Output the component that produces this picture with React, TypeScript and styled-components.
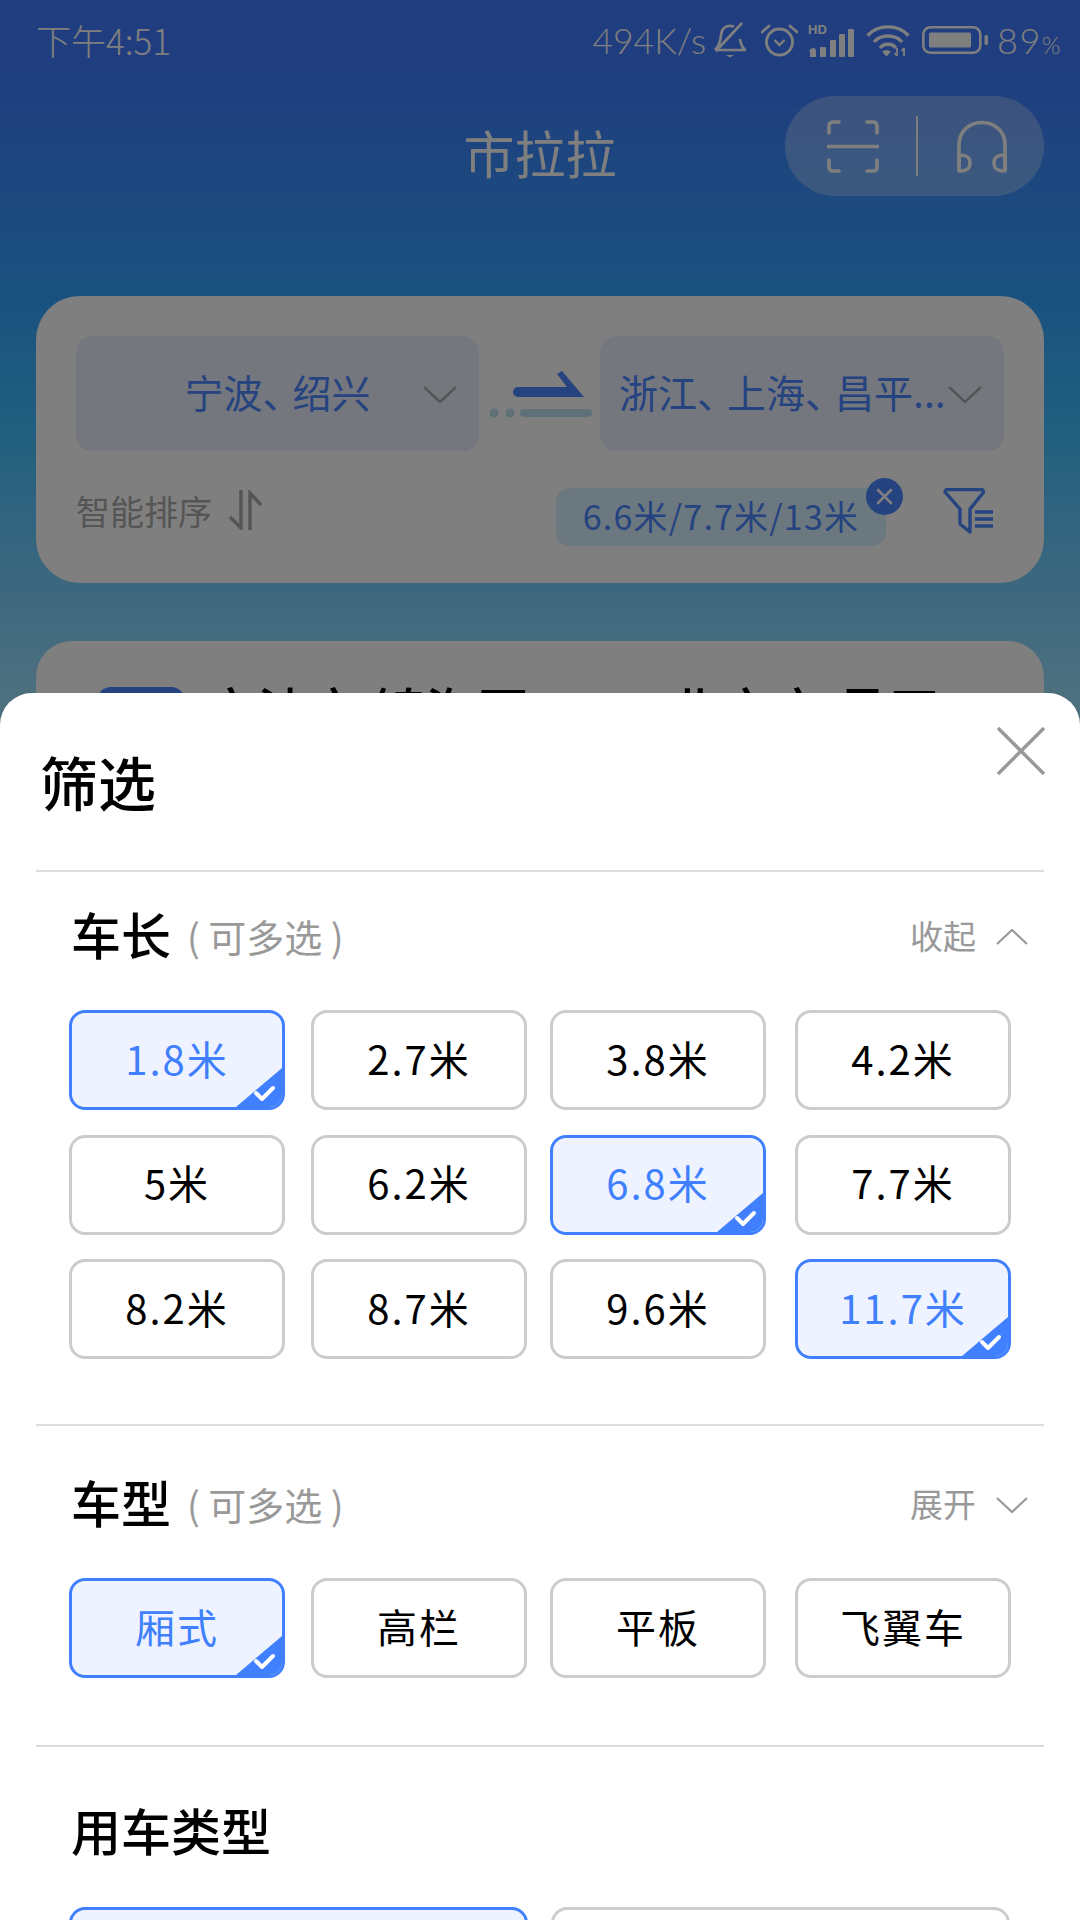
import React from 'react';
import styled, {createGlobalStyle} from 'styled-components';

const Global = createGlobalStyle`
  html, body {
    margin: 0;
    padding: 0;
    background: #fff;
  }
  * {
    box-sizing: border-box;
  }
`;

const Screen = styled.div`
  position: relative;
  width: 1080px;
  height: 1920px;
  overflow: hidden;
  font-family: 'Noto Sans CJK SC', 'Noto Sans', sans-serif;
  background: linear-gradient(
    180deg,
    #427afe 0,
    #3f80fe 100px,
    #3c8aff 150px,
    #34a4ff 300px,
    #42c0fe 430px,
    #7ed0fe 600px,
    #9ae0ff 690px,
    #9ae0ff 100%
  );
`;

const StatusBar = styled.div`
  display: flex;
  align-items: center;
  justify-content: space-between;
  height: 80px;
  padding: 0 18px 0 36px;
  color: #fff;
  font-family: 'Lato', 'Noto Sans CJK SC', sans-serif;
  font-weight: 300;
`;

const Clock = styled.span`
  font-size: 35px;
  line-height: 78px;
  font-family: 'Noto Sans CJK SC', sans-serif;
  font-weight: 300;
`;

const StatusRight = styled.div`
  display: flex;
  align-items: center;
`;

const Speed = styled.span`
  font-size: 35.5px;
  margin-right: 7px;
`;

const StatusIcon = styled.svg<{$ml?: number}>`
  display: block;
  margin-left: ${p => p.$ml ?? 0}px;
`;

const Percent = styled.span`
  margin-left: 9px;
  font-size: 36px;
  letter-spacing: 1.5px;

  small {
    font-size: 24px;
  }
`;

const Header = styled.div`
  display: grid;
  grid-template-columns: 1fr auto 1fr;
  padding: 16px 36px 0;
`;

const Title = styled.div`
  grid-column: 2;
  margin-top: 19px;
  font-size: 51px;
  line-height: 74px;
  color: #fff;
`;

const Pill = styled.div`
  justify-self: end;
  display: flex;
  align-items: center;
  width: 259px;
  height: 100px;
  padding-left: 42px;
  border-radius: 50px;
  background: rgba(255, 255, 255, 0.3);
`;

const PillRule = styled.div`
  width: 2px;
  height: 60px;
  margin: 0 39px 0 37px;
  background: #fff;
`;

const SearchCard = styled.div`
  margin: 100px 36px 0;
  height: 287px;
  padding: 40px;
  border-radius: 44px;
  background: #fff;
`;

const RouteRow = styled.div`
  display: flex;
  height: 115px;
`;

const CityBox = styled.div<{$pad?: boolean}>`
  position: relative;
  width: ${p => (p.$pad ? 404 : 403)}px;
  display: flex;
  align-items: center;
  justify-content: ${p => (p.$pad ? 'flex-start' : 'center')};
  padding-left: ${p => (p.$pad ? 19 : 0)}px;
  padding-bottom: 5px;
  border-radius: 16px;
  background: #eaeefe;
  color: #4a86ff;
  font-size: 39px;
  white-space: nowrap;
`;

const Dun = styled.span`
  letter-spacing: -9px;
`;

const BoxChevron = styled.svg`
  position: absolute;
  right: 22px;
  top: 50px;
`;

const OptionRow = styled.div`
  display: flex;
  align-items: flex-start;
  justify-content: space-between;
  margin-top: 37px;
  padding-right: 11px;
`;

const SortLabel = styled.div`
  display: flex;
  align-items: center;
  gap: 16px;
  height: 44px;
  font-size: 34px;
  color: #aaa;
`;

const TagGroup = styled.div`
  display: flex;
  gap: 57px;
`;

const Tag = styled.div`
  position: relative;
  width: 330px;
  height: 58px;
  border-radius: 14px;
  background: #d7f0ff;
  color: #4a86ff;
  font-size: 34px;
  line-height: 56px;
  text-align: center;
  letter-spacing: 1.2px;
`;

const TagClear = styled.svg`
  position: absolute;
  right: -17px;
  top: -10px;
`;

const TripCard = styled.div`
  display: flex;
  align-items: flex-start;
  margin: 58px 36px 0;
  height: 400px;
  padding: 46px 0 0 61px;
  border-radius: 36px;
  background: #fff;
`;

const TripBadge = styled.div`
  width: 88px;
  height: 60px;
  margin-right: 20px;
  border-radius: 14px 14px 0 0;
  background: #4a86ff;
`;

const TripPlace = styled.div<{$gap?: number}>`
  margin-top: -7px;
  margin-right: ${p => p.$gap ?? 0}px;
  font-size: 52px;
  line-height: 60px;
  font-weight: 500;
  color: #000;
  white-space: pre;
`;

const Dim = styled.div`
  position: absolute;
  inset: 0;
  background: rgba(0, 0, 0, 0.5);
`;

const Sheet = styled.div`
  position: absolute;
  left: 0;
  right: 0;
  top: 693px;
  bottom: 0;
  overflow: hidden;
  border-radius: 32px 32px 0 0;
  background: #fff;
`;

const SheetHead = styled.div`
  display: flex;
  align-items: flex-start;
  justify-content: space-between;
  height: 177px;
  padding: 34px 35px 0 40px;
`;

const SheetTitle = styled.div`
  margin-top: 16px;
  font-size: 58px;
  line-height: 76px;
  font-weight: 500;
  color: #000;
`;

const Section = styled.section<{$top: number; $bottom: number}>`
  margin: 0 36px;
  padding: ${p => p.$top}px 16px ${p => p.$bottom}px 33px;
  border-top: 2px solid #dcdcdc;
`;

const SectionHead = styled.div<{$mb?: number}>`
  display: flex;
  align-items: center;
  justify-content: space-between;
  height: 60px;
  margin-bottom: ${p => p.$mb ?? 43}px;
`;

const SectionName = styled.div`
  display: flex;
  align-items: center;
  padding: 0 0 8px 2px;
  font-size: 50px;
  font-weight: 500;
  color: #000;

  span {
    margin: 4px 0 0 16px;
    font-size: 38px;
    font-weight: 400;
    color: #999;
  }
`;

const Toggle = styled.div`
  display: flex;
  align-items: center;
  gap: 20px;
  font-size: 33px;
  color: #999;

  span {
    padding-bottom: 5px;
  }
`;

const ChipGrid = styled.div<{$wide?: boolean}>`
  display: grid;
  grid-template-columns: ${p => (p.$wide ? '482px 459px' : '242px 239px 245px 216px')};
  grid-auto-rows: 100px;
  row-gap: 24.5px;
`;

const Chip = styled.div<{$on?: boolean; $wide?: boolean}>`
  position: relative;
  display: flex;
  align-items: center;
  justify-content: center;
  width: ${p => (p.$wide ? 459 : 216)}px;
  height: 100px;
  padding-bottom: 5px;
  overflow: hidden;
  border: 3px solid ${p => (p.$on ? '#4080ff' : '#cccccc')};
  border-radius: 16px;
  background: ${p => (p.$on ? '#eef3ff' : '#fff')};
  color: ${p => (p.$on ? '#4080ff' : '#000')};
  font-size: 40px;
  letter-spacing: 2px;
`;

const ChipCorner = styled.svg`
  position: absolute;
  right: 0;
  bottom: 0;
`;

const Chevron = ({up}: {up?: boolean}) => (
  <svg width="32" height="16" viewBox="0 0 32 16" fill="none" stroke="#999" strokeWidth="2.2">
    <path d={up ? 'M1 15L16 1L31 15' : 'M1 1L16 15L31 1'} />
  </svg>
);

const GreyChevron = () => (
  <BoxChevron width="34" height="17" viewBox="0 0 34 17" fill="none" stroke="#aaa" strokeWidth="2.4">
    <path d="M1 1L17 16L33 1" />
  </BoxChevron>
);

const Tick = () => (
  <ChipCorner width="46" height="39" viewBox="0 0 46 39">
    <path d="M46 0V39H0Z" fill="#4080ff" />
    <path d="M20 25L26 31L37 20" fill="none" stroke="#fff" strokeWidth="4" strokeLinecap="round" strokeLinejoin="round" />
  </ChipCorner>
);

const Option = ({label, on, wide}: {label: string; on?: boolean; wide?: boolean}) => (
  <Chip $on={on} $wide={wide}>
    {label}
    {on && <Tick />}
  </Chip>
);

const BellOff = () => (
  <StatusIcon width="34" height="36" viewBox="0 0 34 36" fill="none" stroke="#fff" strokeWidth="2.6" $ml={0}>
    <path d="M2 28H32C28 24 27.5 21 27 17M21 4.500C13 2 8.500 7 8 13C7.500 20 6 24 2 28" strokeLinejoin="round" />
    <path d="M3 29L29 1" />
    <path d="M13 33H21L17 35.500Z" fill="#fff" stroke="none" />
  </StatusIcon>
);

const Alarm = () => (
  <StatusIcon width="37" height="34" viewBox="0 0 37 34" fill="none" stroke="#fff" strokeWidth="2.8" $ml={14}>
    <circle cx="18.500" cy="19" r="13" />
    <path d="M1 9L8 3M36 9L29 3" strokeLinecap="round" />
    <path d="M13.500 17L18.500 22L23.500 17" strokeWidth="2.4" />
  </StatusIcon>
);

const Signal = () => (
  <StatusIcon width="46" height="34" viewBox="0 0 46 34" $ml={10} fill="#fff">
    <text x="0" y="11" fontFamily="'Liberation Sans', sans-serif" fontWeight="700" fontSize="13">HD</text>
    <path d="M2 30a3 3 0 0 1 6 -3v7H2Z" />
    <rect x="12" y="24" width="6" height="10" rx="1" />
    <rect x="22" y="17" width="6" height="17" rx="1" />
    <rect x="31" y="11" width="6" height="23" rx="1" />
    <rect x="40" y="6" width="6" height="28" rx="1" />
  </StatusIcon>
);

const Wifi = () => (
  <StatusIcon width="44" height="33" viewBox="0 0 44 33" fill="none" stroke="#fff" strokeWidth="3.4" $ml={12}>
    <path d="M1.500 11.500C12 0 32 0 42.500 11.500" />
    <path d="M8 18C15 10 29 10 36 18" />
    <path d="M14 24C18 19 26 19 30 24" />
    <path d="M16 27.500C19 25.500 22 25.500 25 27.500L20.500 32.500Z" fill="#fff" stroke="none" />
    <path d="M31 24V32M28.500 29L31 32M38 32V24M35.500 27L38 24" strokeWidth="1.800" />
  </StatusIcon>
);

const Battery = () => (
  <StatusIcon width="66" height="28" viewBox="0 0 66 28" fill="none" $ml={12}>
    <rect x="1.300" y="1.300" width="57" height="25.400" rx="7" stroke="#fff" strokeWidth="2.6" />
    <rect x="7" y="6.500" width="42" height="15" rx="1.500" fill="#fff" />
    <rect x="62.500" y="9" width="3.500" height="10" rx="1.700" fill="#fff" />
  </StatusIcon>
);

const ScanIcon = () => (
  <svg width="52" height="53" viewBox="0 0 52 53" fill="none" stroke="#fff" strokeWidth="3.600" strokeLinecap="round">
    <path d="M2 13V6Q2 2 6 2H12M40 2H46Q50 2 50 6V13M2 40V47Q2 51 6 51H12M40 51H46Q50 51 50 47V40" />
    <path d="M0 26.500H52" strokeLinecap="butt" />
  </svg>
);

const HeadsetIcon = () => (
  <svg width="50" height="53" viewBox="0 0 50 53" fill="none" stroke="#fff" strokeWidth="3.600">
    <path d="M2 50V25C2 -5 48 -5 48 25V50" />
    <path d="M2 35C11 35 13 38 13 43C13 48 11 51 2 51ZM48 35C39 35 37 38 37 43C37 48 39 51 48 51Z" strokeLinejoin="round" />
  </svg>
);

const RouteArrow = () => (
  <svg width="121" height="115" viewBox="0 0 121 115">
    <path d="M39 51H88L78 38L83 35L105 61H39A5 5 0 0 1 39 51Z" fill="#4a86ff" />
    <circle cx="15" cy="77" r="4.500" fill="#bde0f0" />
    <circle cx="31" cy="77" r="4.500" fill="#bde0f0" />
    <rect x="41" y="73" width="72" height="8" rx="4" fill="#bde0f0" />
  </svg>
);

const SortIcon = () => (
  <svg width="34" height="40" viewBox="0 0 34 40" fill="none" stroke="#aaa" strokeWidth="3.500">
    <path d="M13 0V38L2 27" />
    <path d="M22 40V3L33 15" />
  </svg>
);

const FilterIcon = () => (
  <svg width="50" height="46" viewBox="0 0 50 46" fill="none" stroke="#4a86ff" strokeWidth="3.400" strokeLinejoin="round">
    <path d="M2 4C2 2 3 1.500 5 1.500H38C40 1.500 41 3 40 5L27 21V44L17 36V21Z" />
    <path d="M32 24H50M32 31H50M32 38H50" />
  </svg>
);

const ClearIcon = () => (
  <TagClear width="37" height="37" viewBox="0 0 37 37">
    <circle cx="18.500" cy="18.500" r="18.500" fill="#4a86ff" />
    <path d="M12 12L25 25M25 12L12 25" stroke="#fff" strokeWidth="2.600" strokeLinecap="round" />
  </TagClear>
);

const CloseIcon = () => (
  <svg width="48" height="48" viewBox="0 0 48 48" stroke="#999" strokeWidth="3.400" fill="none">
    <path d="M1 1L47 47M47 1L1 47" />
  </svg>
);

const App = () => (
  <Screen>
    <Global />
    <StatusBar>
      <Clock>下午4:51</Clock>
      <StatusRight>
        <Speed>494K/s</Speed>
        <BellOff />
        <Alarm />
        <Signal />
        <Wifi />
        <Battery />
        <Percent>
          89<small>%</small>
        </Percent>
      </StatusRight>
    </StatusBar>
    <Header>
      <Title>市拉拉</Title>
      <Pill>
        <ScanIcon />
        <PillRule />
        <HeadsetIcon />
      </Pill>
    </Header>
    <SearchCard>
      <RouteRow>
        <CityBox>
          宁波<Dun>、</Dun>绍兴
          <GreyChevron />
        </CityBox>
        <RouteArrow />
        <CityBox $pad>
          浙江<Dun>、</Dun>上海<Dun>、</Dun>昌平...
          <GreyChevron />
        </CityBox>
      </RouteRow>
      <OptionRow>
        <SortLabel>
          智能排序
          <SortIcon />
        </SortLabel>
        <TagGroup>
          <Tag>
            6.6米/7.7米/13米
            <ClearIcon />
          </Tag>
          <FilterIcon />
        </TagGroup>
      </OptionRow>
    </SearchCard>
    <TripCard>
      <TripBadge />
      <TripPlace $gap={140}>宁波市 镇海区</TripPlace>
      <TripPlace>北京市 昌平</TripPlace>
    </TripCard>
    <Dim />
    <Sheet>
      <SheetHead>
        <SheetTitle>筛选</SheetTitle>
        <CloseIcon />
      </SheetHead>
      <Section $top={35} $bottom={65}>
        <SectionHead>
          <SectionName>
            车长<span>( 可多选 )</span>
          </SectionName>
          <Toggle>
            <span>收起</span>
            <Chevron up />
          </Toggle>
        </SectionHead>
        <ChipGrid>
          <Option label="1.8米" on />
          <Option label="2.7米" />
          <Option label="3.8米" />
          <Option label="4.2米" />
          <Option label="5米" />
          <Option label="6.2米" />
          <Option label="6.8米" on />
          <Option label="7.7米" />
          <Option label="8.2米" />
          <Option label="8.7米" />
          <Option label="9.6米" />
          <Option label="11.7米" on />
        </ChipGrid>
      </Section>
      <Section $top={49} $bottom={67}>
        <SectionHead>
          <SectionName>
            车型<span>( 可多选 )</span>
          </SectionName>
          <Toggle>
            <span>展开</span>
            <Chevron />
          </Toggle>
        </SectionHead>
        <ChipGrid>
          <Option label="厢式" on />
          <Option label="高栏" />
          <Option label="平板" />
          <Option label="飞翼车" />
        </ChipGrid>
      </Section>
      <Section $top={56} $bottom={0}>
        <SectionHead $mb={44}>
          <SectionName>用车类型</SectionName>
        </SectionHead>
        <ChipGrid $wide>
          <Option label="" on wide />
          <Option label="" wide />
        </ChipGrid>
      </Section>
    </Sheet>
  </Screen>
);

export default App;
